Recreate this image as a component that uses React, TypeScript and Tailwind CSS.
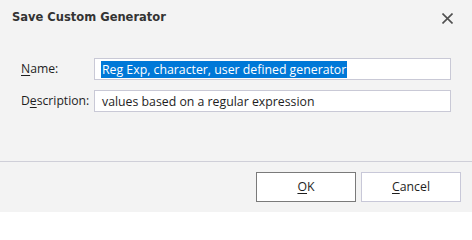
import React from "react";

const ui = { fontFamily: '"Open Sans", "Noto Sans", sans-serif' };
const titleFont = { fontFamily: '"DejaVu Sans", "Liberation Sans", sans-serif' };

function Field({
  label,
  value,
  selected,
}: {
  label: [string, string, string];
  value: string;
  selected?: boolean;
}) {
  return (
    <div className="flex items-center h-[22px]">
      <label className="w-[73px] shrink-0 text-[12.2px] text-[#1e1e1e]">
        {label[0]}
        <span className="underline underline-offset-2">{label[1]}</span>
        {label[2]}
      </label>
      <div className="flex-1 h-[22px] bg-white border border-[#c9c9d6] flex items-center pl-[6px]">
        <span
          className={
            selected
              ? "bg-[#0078d7] text-white text-[12.3px] leading-[17px] px-px"
              : "text-[#1e1e1e] text-[12.3px] leading-[17px] px-px"
          }
        >
          {value}
        </span>
      </div>
    </div>
  );
}

export default function App() {
  return (
    <div className="w-[472px] h-[216px] bg-[#f3f3f3] flex flex-col" style={ui}>
      <div className="h-[36px] flex items-center justify-between pl-[12px] pr-[19px]">
        <h1 className="text-[11.5px] font-bold text-[#333333]" style={titleFont}>
          Save Custom Generator
        </h1>
        <button className="w-[12px] h-[12px] flex items-center justify-center text-[#505050]">
          <svg width="11" height="11" viewBox="0 0 11 11" fill="none" stroke="currentColor" strokeWidth="1.6">
            <path d="M0.5 0.5l10 10M10.5 0.5l-10 10" />
          </svg>
        </button>
      </div>

      <div className="flex-1 flex flex-col gap-[10px] pt-[22px] pl-[21px] pr-[21px]">
        <Field label={["", "N", "ame:"]} value="Reg Exp, character, user defined generator" selected />
        <Field label={["D", "e", "scription:"]} value="values based on a regular expression" />
      </div>

      <div className="border-t border-[#cfcfd8] h-[51px] flex justify-end items-start gap-[5px] pt-[10px] pr-[11px]">
        <button className="w-[100px] h-[30px] bg-white border border-[#7a7a7a] text-[12.3px] text-[#1e1e1e]">
          <span className="underline underline-offset-2">O</span>K
        </button>
        <button className="w-[100px] h-[30px] bg-white border border-[#c8c8d8] text-[12.3px] text-[#1e1e1e]">
          <span className="underline underline-offset-2">C</span>ancel
        </button>
      </div>
      <div className="h-[4px] bg-white" />
    </div>
  );
}
